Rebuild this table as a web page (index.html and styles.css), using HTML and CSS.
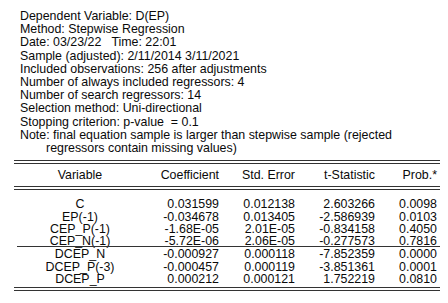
FILE: index.html
```html
<!DOCTYPE html>
<html>
<head>
<meta charset="utf-8">
<link rel="stylesheet" href="styles.css">
</head>
<body>
<div class="out">
  <div class="info">
    <div>Dependent Variable: D(EP)</div>
    <div>Method: Stepwise Regression</div>
    <div>Date: 03/23/22&nbsp;&nbsp; Time: 22:01</div>
    <div>Sample (adjusted): 2/11/2014 3/11/2021</div>
    <div>Included observations: 256 after adjustments</div>
    <div>Number of always included regressors: 4</div>
    <div>Number of search regressors: 14</div>
    <div>Selection method: Uni-directional</div>
    <div>Stopping criterion: p-value&nbsp; = 0.1</div>
    <div>Note: final equation sample is larger than stepwise sample (rejected</div>
    <div class="indent">regressors contain missing values)</div>
  </div>
  <div class="tbl">
    <div class="dbl"></div>
    <div class="row head">
      <span class="c1">Variable</span><span>Coefficient</span><span>Std. Error</span><span>t-Statistic</span><span>Prob.*</span>
    </div>
    <div class="dbl"></div>
    <div class="group first">
      <div class="row"><span class="c1">C</span><span>0.031599</span><span>0.012138</span><span>2.603266</span><span>0.0098</span></div>
      <div class="row"><span class="c1">EP(-1)</span><span>-0.034678</span><span>0.013405</span><span>-2.586939</span><span>0.0103</span></div>
      <div class="row"><span class="c1">CEP_P(-1)</span><span>-1.68E-05</span><span>2.01E-05</span><span>-0.834158</span><span>0.4050</span></div>
      <div class="row"><span class="c1">CEP_N(-1)</span><span>-5.72E-06</span><span>2.06E-05</span><span>-0.277573</span><span>0.7816</span></div>
    </div>
    <div class="sgl"></div>
    <div class="group">
      <div class="row"><span class="c1">DCEP_N</span><span>-0.000927</span><span>0.000118</span><span>-7.852359</span><span>0.0000</span></div>
      <div class="row"><span class="c1">DCEP_P(-3)</span><span>-0.000457</span><span>0.000119</span><span>-3.851361</span><span>0.0001</span></div>
      <div class="row"><span class="c1">DCEP_P</span><span>0.000212</span><span>0.000121</span><span>1.752219</span><span>0.0810</span></div>
    </div>
    <div class="dbl bottom"></div>
  </div>
</div>
</body>
</html>
```
FILE: styles.css
```css
html, body {
  margin: 0;
  padding: 0;
  background: #ffffff;
}
body {
  font-family: "Liberation Sans", Arial, sans-serif;
  font-size: 12.4px;
  color: #0a0a0a;
}
.out {
  padding-top: 10px;
  width: 448px;
}
.info {
  padding-left: 20px;
  line-height: 13.2px;
  white-space: nowrap;
}
.info .indent {
  padding-left: 26px;
}
.tbl {
  margin-left: 14px;
  width: 426px;
  margin-top: 5px;
}
.dbl {
  height: 2px;
  border-top: 1px solid #333;
  border-bottom: 1px solid #333;
}
.sgl {
  height: 0;
  border-top: 1px solid #333;
  margin-left: 3px;
  margin-top: -1px;
  margin-bottom: 1px;
  position: relative;
}
.row {
  display: grid;
  grid-template-columns: 132px 73px 76px 80px 62px;
  line-height: 12.3px;
  white-space: nowrap;
}
.row span {
  text-align: right;
}
.row .c1 {
  text-align: center;
}
.head {
  line-height: 22px;
}
.group.first {
  padding-top: 8px;
}
.bottom {
  margin-top: 2px;
}
```
